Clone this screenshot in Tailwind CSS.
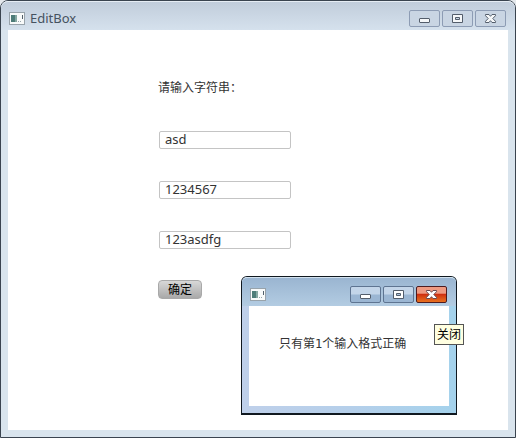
<!DOCTYPE html>
<html lang="zh-CN">
<head>
  <meta charset="UTF-8">
  <meta name="viewport" content="width=device-width, initial-scale=1.0">
  <title>EditBox</title>
  <script src="https://cdn.jsdelivr.net/npm/@tailwindcss/browser@4"></script>
</head>
<body class="bg-[#e4e8ec] font-['Noto_Sans','Noto_Sans_CJK_SC',sans-serif] text-[#333]">
  <!-- Main window -->
  <div class="relative flex flex-col min-h-screen border border-[#3a444f] rounded-t-lg bg-[#d9e4ed] px-[7px] pb-[7px]">

    <!-- Title bar -->
    <header class="flex items-center justify-between h-[29px] -mx-[7px] pl-2 pr-[9px] rounded-t-[7px] bg-linear-to-b from-[#c1cddb] to-[#d5e1ed] border-t border-[#e6edf4]">
      <div class="flex items-center gap-[5px] pt-1">
        <svg class="w-4 h-[13px]" viewBox="0 0 16 13">
          <rect x=".5" y=".5" width="15" height="12" fill="#f8fafa" stroke="#98a3ab"/>
          <rect x="2" y="3" width="4" height="7" fill="#4d7c78"/>
          <rect x="6" y="3" width="2" height="7" fill="#86a8a2"/>
          <path d="M9 9.500h1M11 9.500h1" stroke="#9aa6ac"/>
          <path d="M13.500 3v4" stroke="#52606b"/>
        </svg>
        <h1 class="text-[13px] leading-4 text-[#46525f]">EditBox</h1>
      </div>
      <div class="flex gap-0.5 pt-1">
        <button aria-label="最小化" class="flex items-center justify-center w-[31px] h-[17px] rounded-xs border border-[#8d9cb4] bg-[#c9d5e3]">
          <svg class="w-[13px] h-[11px]" viewBox="0 0 13 11"><rect x="1.500" y="5.500" width="10" height="4" rx=".5" fill="#f5f7f9" stroke="#535d6b"/></svg>
        </button>
        <button aria-label="最大化" class="flex items-center justify-center w-[31px] h-[17px] rounded-xs border border-[#8d9cb4] bg-[#c9d5e3]">
          <svg class="w-[13px] h-[11px]" viewBox="0 0 13 11"><path fill-rule="evenodd" d="M1.500 1.500h10v8h-10zM4.500 4.500h4v2h-4z" fill="#f5f7f9" stroke="#535d6b"/></svg>
        </button>
        <button aria-label="关闭" class="flex items-center justify-center w-[31px] h-[17px] rounded-xs border border-[#8d9cb4] bg-[#c9d5e3]">
          <svg class="w-[13px] h-[11px]" viewBox="0 0 13 11"><path d="M1.500 1.500h3.500l1.500 1.800 1.500-1.800h3.500v1.200L8.800 5.500l2.700 2.800v1.200H8L6.500 7.700 5 9.500H1.500V8.300l2.700-2.800-2.700-2.800z" fill="#f5f7f9" stroke="#535d6b"/></svg>
        </button>
      </div>
    </header>

    <!-- Form -->
    <main class="grow bg-white pl-[150px] pt-12">
      <form class="flex flex-col items-start">
        <p class="text-xs leading-5">请输入字符串：</p>
        <input aria-label="字符串 1" value="asd" class="mt-[33px] ml-px w-[132px] h-[18px] px-[5px] border border-[#c4c4c4] rounded-xs text-[13px]">
        <input aria-label="字符串 2" value="1234567" class="mt-8 ml-px w-[132px] h-[18px] px-[5px] border border-[#c4c4c4] rounded-xs text-[13px]">
        <input aria-label="字符串 3" value="123asdfg" class="mt-8 ml-px w-[132px] h-[18px] px-[5px] border border-[#c4c4c4] rounded-xs text-[13px]">
        <button type="button" class="mt-[31px] w-11 h-[19px] rounded-sm border border-[#a9a9a9] bg-linear-to-b from-[#d8d8d8] to-[#a9a9a9] text-xs leading-4 text-black">确定</button>
      </form>
    </main>

    <!-- Message window -->
    <div role="dialog" aria-label="EditBox" class="absolute left-[240px] top-[275px] w-[216px] flex flex-col border border-b-2 border-[#10181f] rounded-t-md bg-linear-to-r from-[#bfd0ea] via-[#b5cfea] to-[#a4d2ec] px-[7px] pb-[7px]">
      <header class="flex items-center justify-between h-[29px] -mx-[7px] pl-2 pr-[9px] rounded-t-[5px] bg-linear-to-b from-[#9ab5d1] to-[#b3cce2] border-t border-[#d3e2ef]">
        <svg class="w-4 h-[13px] mt-1" viewBox="0 0 16 13">
          <rect x=".5" y=".5" width="15" height="12" fill="#f8fafa" stroke="#98a3ab"/>
          <rect x="2" y="3" width="4" height="7" fill="#4d7c78"/>
          <rect x="6" y="3" width="2" height="7" fill="#86a8a2"/>
          <path d="M9 9.500h1M11 9.500h1" stroke="#9aa6ac"/>
          <path d="M13.500 3v4" stroke="#52606b"/>
        </svg>
        <div class="flex gap-0.5 pt-1">
          <button aria-label="最小化" class="flex items-center justify-center w-[31px] h-[17px] rounded-xs border border-[#5e7491] bg-linear-to-b from-[#c3d5e9] from-45% to-[#9bb6d3] to-55%">
            <svg class="w-[13px] h-[11px]" viewBox="0 0 13 11"><rect x="1.500" y="5.500" width="10" height="4" rx=".5" fill="#fff" stroke="#535d6b"/></svg>
          </button>
          <button aria-label="最大化" class="flex items-center justify-center w-[31px] h-[17px] rounded-xs border border-[#5e7491] bg-linear-to-b from-[#c3d5e9] from-45% to-[#9bb6d3] to-55%">
            <svg class="w-[13px] h-[11px]" viewBox="0 0 13 11"><path fill-rule="evenodd" d="M1.500 1.500h10v8h-10zM4.500 4.500h4v2h-4z" fill="#fff" stroke="#535d6b"/></svg>
          </button>
          <button aria-label="关闭" class="flex items-center justify-center w-[31px] h-[17px] rounded-xs border border-[#4d1c20] bg-linear-to-b from-[#ee9a82] from-40% via-[#cf3010] via-50% to-[#e8701f]">
            <svg class="w-[13px] h-[11px]" viewBox="0 0 13 11"><path d="M1.500 1.500h3.500l1.500 1.800 1.500-1.800h3.500v1.200L8.800 5.500l2.700 2.800v1.200H8L6.500 7.700 5 9.500H1.500V8.300l2.700-2.800-2.700-2.800z" fill="#fff" stroke="#6a4a50"/></svg>
          </button>
        </div>
      </header>
      <div class="h-[100px] bg-white pl-[30px] pt-7">
        <p class="text-xs leading-5 font-['DejaVu_Sans_Mono','Noto_Sans_CJK_SC',monospace]">只有第1个输入格式正确</p>
      </div>
      <div role="tooltip" class="absolute left-48 top-[47px] w-[30px] h-[21px] border border-[#555] bg-[#ffffe1] text-center text-xs leading-5 text-black">关闭</div>
    </div>
  </div>
</body>
</html>
